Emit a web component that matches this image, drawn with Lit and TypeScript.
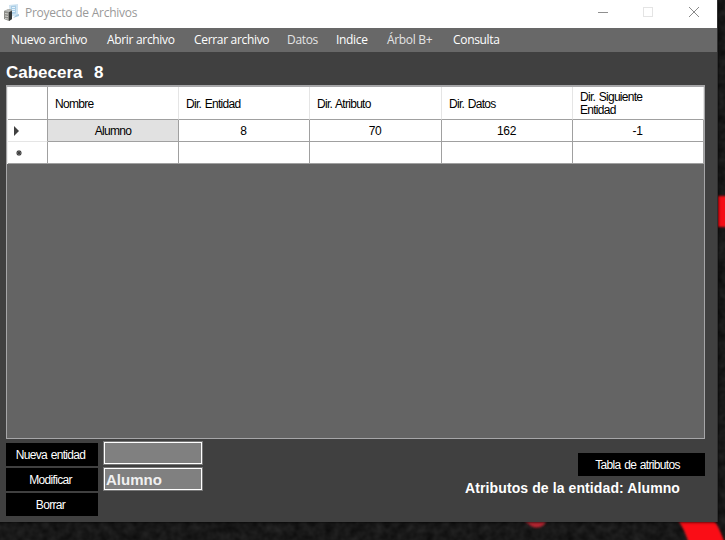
import { LitElement, html, css, svg } from "lit";
import { customElement } from "lit/decorators.js";

const menu: [string, number][] = [
  ["Nuevo archivo", 96], ["Abrir archivo", 87], ["Cerrar archivo", 93],
  ["Datos", 49], ["Indice", 51], ["Árbol B+", 66], ["Consulta", 60],
];
const columns = ["Nombre", "Dir. Entidad", "Dir. Atributo", "Dir. Datos", "Dir. Siguiente Entidad"];
const row = ["Alumno", "8", "70", "162", "-1"];

@customElement("app-root")
export class AppRoot extends LitElement {
  static styles = css`
    :host { display: block; position: relative; width: 725px; height: 540px; overflow: hidden; background: #171717;
      font: 12px/14px "Liberation Sans", Arial, sans-serif; color: #000; }
    * { box-sizing: border-box; }
    .desktop { position: absolute; inset: 0; }
    .window { position: relative; width: 718px; height: 522px; background: #404040; border-right: 1px solid #303030;
      display: flex; flex-direction: column; box-shadow: 0 0 3px #000; }
    .title { height: 28px; background: #fff; display: flex; align-items: center; color: #999; flex: none;
      font: 12px/16px "Open Sans", "Noto Sans", sans-serif; letter-spacing: -0.25px; }
    .title .app { margin: 0 5px 3px 4px; }
    .title .name { flex: 1; padding-bottom: 2px; white-space: nowrap; }
    .title .controls { display: block; }
    .menu { height: 24px; flex: none; background: #686868; color: #fff; padding-left: 11px; display: flex; align-items: center;
      font: 12px/24px "Open Sans", "Noto Sans", sans-serif; letter-spacing: -0.32px; white-space: nowrap; }
    .dim { color: #e4e4e4; }
    .head { height: 33px; flex: none; padding: 11px 0 0 6px; color: #fff; font: bold 17px/20px "Liberation Sans", sans-serif;
      white-space: pre; word-spacing: 1px; }
    .grid { margin-left: 6px; width: 699px; height: 354px; flex: none; background: #646464; border: 1px solid #a6a6a8; border-top-width: 2px; }
    .cells { width: 697px; display: grid; grid-template-columns: 40px 131px 131px 132px 131px 131px; grid-template-rows: 33px 22px 22px;
      letter-spacing: -0.72px; word-spacing: 1px; font-size: 12px; border-left: 1px solid #eee; }
    .cells > div { background: #fff; border-right: 1px solid #a0a0a0; border-bottom: 1px solid #a0a0a0; display: flex; align-items: center; justify-content: center; }
    .cells > .th { justify-content: flex-start; padding: 2px 30px 0 7px; border-right-color: #e5e5e5; line-height: 13px; }
    .cells > .mark { justify-content: flex-start; padding-left: 6px; }
    .cells > .current { border-bottom-color: #e5e5e5; }
    .cells > .sel { background: #e1e1e1; }
    .cells > .num { letter-spacing: -0.4px; padding-right: 1px; }
    .footer { display: flex; justify-content: space-between; padding: 4px 12px 0 6px; }
    .buttons { display: flex; flex-direction: column; gap: 2px; width: 92px; }
    .btn { height: 23px; background: #000; color: #fff; display: flex; align-items: center; justify-content: center;
      padding: 1px 3px 0 0; letter-spacing: -0.68px; word-spacing: 1px; white-space: nowrap; }
    .inputs { display: flex; flex-direction: column; gap: 2px; margin: -2px 0 0 5px; }
    .input { width: 100px; height: 24px; border: 1px solid #777; background: #808080; }
    .inner { height: 22px; border: 1px solid #fff; padding-left: 1px; color: #f0f0f0; font: bold 15px/21px "Liberation Sans", sans-serif; }
    .right { margin-left: auto; display: flex; flex-direction: column; align-items: flex-end; padding-top: 10px; }
    .right .btn { width: 127px; padding-right: 8px; }
    .caption { color: #fff; font: bold 14px/18px "Liberation Sans", sans-serif; letter-spacing: 0.1px; padding: 3px 25px 0 0; white-space: nowrap; }
  `;

  render() {
    return html`
      <svg class="desktop" width="725" height="540">
        <filter id="grain" x="0" y="0" width="1" height="1" color-interpolation-filters="sRGB"><feTurbulence type="fractalNoise" baseFrequency="0.12" numOctaves="2" seed="4" />
          <feColorMatrix values="0.12 0 0 0 0.035  0.12 0 0 0 0.035  0.12 0 0 0 0.035  0 0 0 0 1" /></filter>
        <filter id="soft"><feGaussianBlur stdDeviation="0.8" /></filter>
        <rect width="725" height="540" filter="url(#grain)" />
        <g filter="url(#soft)">
          <rect x="710" y="196" width="20" height="31" fill="#f40d16" />
          <path d="M521 518h27l-4 7q-7 5-13 1z" fill="#b62531" />
          <path d="M678 520h36q6 9 11 24h-36q-4-14-11-24z" fill="#fa1019" />
        </g>
      </svg>
      <div class="window">
        <div class="title">
          <svg class="app" width="16" height="17" viewBox="0 0 16 17">
            <path d="M5 1l9-1v11l-8 2z" fill="#cfe3f1" />
            <path d="M7 2l5-.5v8L7 10z" fill="#a9cde6" /><path d="M8 3.500h3M8 5.500h3M8 7.500h3" stroke="#e7f4fc" />
            <path d="M12 11l3-1v2l-6 2z" fill="#a8c9df" />
            <path d="M0 7l5-2 3 1v9l-3 2-5-2z" fill="#8c8c88" />
            <path d="M5 8l3-1v8l-3 2z" fill="#353838" /><path d="M0 7l4-2 4 1-3 2z" fill="#b9bbb9" />
            <path d="M1 9.500l3 .5M1 12l3 .5M1 14.500l3 .5" stroke="#d2d2cf" />
          </svg>
          <span class="name">Proyecto de Archivos</span>
          <svg class="controls" width="119" height="28" fill="none">
            <path d="M0 12.500h10" stroke="#8f8f8f" />
            <rect x="45.500" y="7.500" width="9" height="9" stroke="#e4e4e4" />
            <path d="M91 7l10 10M101 7L91 17" stroke="#8a8a8a" />
          </svg>
        </div>
        <div class="menu">${menu.map(([t, w]) => html`<span class=${t === "Datos" || t === "Árbol B+" ? "dim" : ""} style="width:${w}px">${t}</span>`)}</div>
        <div class="head">Cabecera  8</div>
        <div class="grid">
          <div class="cells">
            <div></div>${columns.map((c) => html`<div class="th">${c}</div>`)}
            <div class="mark current"><svg width="8" height="10"><path d="M0 0v10l5-5z" fill="#404040" /></svg></div>
            ${row.map((c, i) => html`<div class=${i === 0 ? "sel" : "num"}>${c}</div>`)}
            <div class="mark"><svg width="10" height="8">${svg`<path d="M5 1v6M2 4h6M3 2l4 4M7 2L3 6" stroke="#404040" stroke-width="1.100" />`}</svg></div>
            ${row.map(() => html`<div></div>`)}
          </div>
        </div>
        <div class="footer">
          <div class="buttons"><div class="btn">Nueva entidad</div><div class="btn">Modificar</div><div class="btn">Borrar</div></div>
          <div class="inputs"><div class="input"><div class="inner"></div></div><div class="input"><div class="inner">Alumno</div></div></div>
          <div class="right"><div class="btn">Tabla de atributos</div><div class="caption">Atributos de la entidad: Alumno</div></div>
        </div>
      </div>`;
  }
}
